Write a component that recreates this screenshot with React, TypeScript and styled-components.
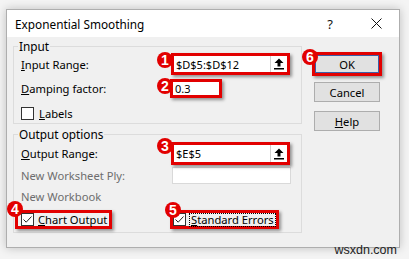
import styled, { createGlobalStyle } from 'styled-components'

const FONT = `"Noto Sans", "Open Sans", sans-serif`
const RED = '#e20000'

const GlobalStyle = createGlobalStyle`
  html, body {
    margin: 0;
    padding: 0;
    background: #f4f4f4;
  }
  body {
    font-family: ${FONT};
    font-size: 11.2px;
    color: #000;
  }
`

const Page = styled.div`
  position: relative;
  width: 409px;
  height: 259px;
  padding: 9px 0 0 6px;
  box-sizing: border-box;
  overflow: hidden;
`

const Dialog = styled.div`
  width: 394px;
  height: 239px;
  box-sizing: border-box;
  border: 1px solid #aeaeae;
  background: #f0f0f0;
  box-shadow: 0 0 9px rgba(0, 0, 0, 0.22);
  display: flex;
  flex-direction: column;
`

const TitleBar = styled.div`
  height: 27px;
  flex: none;
  display: flex;
  align-items: center;
  background: #fff;
  padding-left: 8px;
`

const TitleText = styled.div`
  flex: 1;
  font-size: 11.8px;
`

const TitleButton = styled.div`
  width: 46px;
  height: 27px;
  display: flex;
  align-items: center;
  justify-content: center;
  font-size: 13px;
  color: #111;
`

const Body = styled.div`
  display: flex;
  gap: 10px;
  padding: 9px 0 0 6px;
`

const LeftCol = styled.div`
  width: 289px;
  display: flex;
  flex-direction: column;
`

const Group = styled.div<{ $top?: number }>`
  border: 1px solid #dcdcdc;
  margin-top: ${(p) => p.$top ?? 0}px;
  padding: 0 7px 3px 7px;
  display: flex;
  flex-direction: column;
`

const Legend = styled.div`
  margin: -8px 0 0 -3px;
  padding: 0 1px;
  width: fit-content;
  height: 14px;
  line-height: 14px;
  background: #f0f0f0;
  font-size: 11.8px;
`

const Row = styled.div<{ $h: number; $top?: number }>`
  display: grid;
  grid-template-columns: 150px auto;
  align-items: center;
  height: ${(p) => p.$h}px;
  margin-top: ${(p) => p.$top ?? 0}px;
`

const Label = styled.span<{ $disabled?: boolean }>`
  color: ${(p) => (p.$disabled ? '#6d6d6d' : '#000')};
  white-space: nowrap;
`

const Key = styled.span`
  text-decoration: underline;
  text-underline-offset: 1px;
`

const RedBox = styled.div<{ $w?: number; $shift?: number }>`
  position: relative;
  box-sizing: border-box;
  width: ${(p) => (p.$w ? `${p.$w}px` : 'fit-content')};
  margin-left: ${(p) => p.$shift ?? 0}px;
  border: 3px solid ${RED};
  box-shadow: 2px 2px 3px rgba(0, 0, 0, 0.4);
  display: flex;
  align-items: center;
`

const Badge = styled.div<{ $x: number; $y: number }>`
  position: absolute;
  left: ${(p) => p.$x}px;
  top: ${(p) => p.$y}px;
  width: 16px;
  height: 16px;
  border-radius: 50%;
  background: ${RED};
  color: #fff;
  font-family: "Liberation Sans", Arial, sans-serif;
  font-weight: bold;
  font-size: 14px;
  line-height: 16px;
  text-align: center;
  z-index: 2;
`

const Field = styled.div<{ $h: number }>`
  flex: 1;
  height: ${(p) => p.$h}px;
  background: #fff;
  display: flex;
  align-items: center;
  padding-left: 2px;
  font-size: 11px;
`

const FieldText = styled.span`
  flex: 1;
`

const RefButton = styled.div`
  width: 16px;
  height: 100%;
  border-left: 1px solid #cfcfcf;
  display: flex;
  align-items: center;
  justify-content: center;
`

const DisabledField = styled.div`
  width: 117px;
  height: 15px;
  margin-left: 1px;
  background: #fff;
  border: 1px solid #d9d9d9;
`

const Check = styled.div`
  width: 11px;
  height: 11px;
  flex: none;
  border: 1px solid #333;
  background: #fff;
  display: flex;
  align-items: center;
  justify-content: center;
`

const CheckRow = styled.div<{ $top?: number }>`
  display: flex;
  align-items: center;
  gap: 5px;
  height: 14px;
  margin-top: ${(p) => p.$top ?? 0}px;
`

const CheckGrid = styled.div`
  display: grid;
  grid-template-columns: 149px auto;
  align-items: center;
  height: 19px;
  margin-top: 6px;
`

const BoxInner = styled.div<{ $pl: number; $pr: number }>`
  display: flex;
  align-items: center;
  gap: 4px;
  height: 13px;
  padding: 0 ${(p) => p.$pr}px 0 ${(p) => p.$pl}px;
`

const Focus = styled.span`
  outline: 1px dotted #000;
  outline-offset: 0;
  padding: 0 1px;
  line-height: 12px;
`

const ButtonCol = styled.div`
  display: flex;
  flex-direction: column;
  align-items: flex-start;
  padding-top: 6px;
`

const Button = styled.div<{ $top?: number; $default?: boolean }>`
  box-sizing: border-box;
  width: ${(p) => (p.$default ? 64 : 66)}px;
  height: ${(p) => (p.$default ? 18 : 20)}px;
  margin-top: ${(p) => p.$top ?? 0}px;
  margin-left: ${(p) => (p.$default ? 0 : 2)}px;
  background: #e1e1e1;
  border: 1px solid ${(p) => (p.$default ? '#3a5fa8' : '#adadad')};
  display: flex;
  align-items: center;
  justify-content: center;
`

const Watermark = styled.div`
  position: absolute;
  right: 12px;
  bottom: 2px;
  font-family: "Liberation Sans", Arial, sans-serif;
  font-size: 12.5px;
  color: #222;
`

function UpIcon() {
  return (
    <svg width="10" height="12" viewBox="0 0 10 12">
      <path d="M5 0.5 L9.5 5 H6.5 V8.5 H3.5 V5 H0.5 Z" fill="#000" />
      <rect x="0" y="10" width="10" height="1.5" fill="#000" />
    </svg>
  )
}

function Tick() {
  return (
    <svg width="11" height="11" viewBox="0 0 11 11">
      <path d="M1.5 5.5 L4.2 8.2 L9.5 2.5" fill="none" stroke="#222" strokeWidth="1" />
    </svg>
  )
}

export default function App() {
  return (
    <>
      <GlobalStyle />
      <Page>
        <Dialog>
          <TitleBar>
            <TitleText>Exponential Smoothing</TitleText>
            <TitleButton>?</TitleButton>
            <TitleButton>
              <svg width="11" height="11" viewBox="0 0 11 11">
                <path d="M0.5 0.5 L10.5 10.5 M10.5 0.5 L0.5 10.5" stroke="#111" strokeWidth="1" />
              </svg>
            </TitleButton>
          </TitleBar>
          <Body>
            <LeftCol>
              <Group>
                <Legend>Input</Legend>
                <Row $h={22}>
                  <Label>
                    <Key>I</Key>nput Range:
                  </Label>
                  <RedBox $w={119}>
                    <Badge $x={-17} $y={-4}>1</Badge>
                    <Field $h={16}>
                      <FieldText>$D$5:$D$12</FieldText>
                      <RefButton>
                        <UpIcon />
                      </RefButton>
                    </Field>
                  </RedBox>
                </Row>
                <Row $h={19} $top={4}>
                  <Label>
                    <Key>D</Key>amping factor:
                  </Label>
                  <RedBox $w={52} $shift={-1}>
                    <Badge $x={-16} $y={-4}>2</Badge>
                    <Field $h={13}>0.3</Field>
                  </RedBox>
                </Row>
                <CheckRow $top={8}>
                  <Check />
                  <Label>
                    <Key>L</Key>abels
                  </Label>
                </CheckRow>
              </Group>

              <Group $top={10}>
                <Legend>Output options</Legend>
                <Row $h={23} $top={1}>
                  <Label>
                    <Key>O</Key>utput Range:
                  </Label>
                  <RedBox $w={119}>
                    <Badge $x={-17} $y={-7}>3</Badge>
                    <Field $h={17}>
                      <FieldText>$E$5</FieldText>
                      <RefButton>
                        <UpIcon />
                      </RefButton>
                    </Field>
                  </RedBox>
                </Row>
                <Row $h={17} $top={2}>
                  <Label $disabled>New Worksheet Ply:</Label>
                  <DisabledField />
                </Row>
                <Row $h={16} $top={4}>
                  <Label $disabled>New Workbook</Label>
                </Row>
                <CheckGrid>
                  <RedBox $shift={-6}>
                    <Badge $x={-11} $y={-12}>4</Badge>
                    <BoxInner $pl={3} $pr={2}>
                      <Check>
                        <Tick />
                      </Check>
                      <Label>
                        <Key>C</Key>hart Output
                      </Label>
                    </BoxInner>
                  </RedBox>
                  <RedBox>
                    <Badge $x={-8} $y={-11}>5</Badge>
                    <BoxInner $pl={0} $pr={1}>
                      <Check>
                        <Tick />
                      </Check>
                      <Focus>
                        <Key>S</Key>tandard Errors
                      </Focus>
                    </BoxInner>
                  </RedBox>
                </CheckGrid>
              </Group>
            </LeftCol>

            <ButtonCol>
              <RedBox $w={70}>
                <Badge $x={-13} $y={-6}>6</Badge>
                <Button $default>OK</Button>
              </RedBox>
              <Button $top={6}>Cancel</Button>
              <Button $top={9}>
                <span>
                  <Key>H</Key>elp
                </span>
              </Button>
            </ButtonCol>
          </Body>
        </Dialog>
        <Watermark>wsxdn.com</Watermark>
      </Page>
    </>
  )
}
